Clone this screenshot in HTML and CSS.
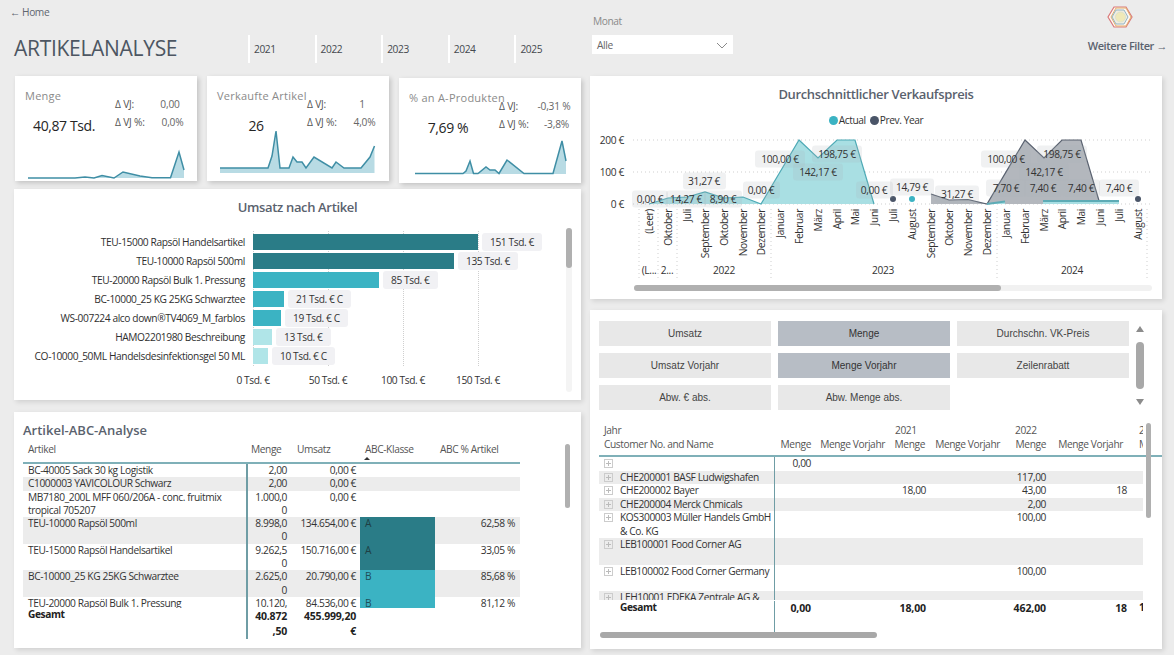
FILE: index.html
```html
<!DOCTYPE html>
<html lang="de">
<head>
<meta charset="utf-8">
<title>Artikelanalyse</title>
<link rel="stylesheet" href="styles.css">
</head>
<body>
<div class="page">
  <header class="top">
    <div class="brand">
      <div class="home">← Home</div>
      <h1>ARTIKELANALYSE</h1>
    </div>
    <nav class="years">
      <span class="year">2021</span><span class="year">2022</span><span class="year">2023</span><span class="year">2024</span><span class="year">2025</span>
    </nav>
    <div class="month">
      <div class="month-label">Monat</div>
      <div class="select"><span>Alle</span>
        <svg class="chev" width="12" height="7" viewBox="0 0 12 7"><path d="M1 1l5 5 5-5" fill="none" stroke="#8a8a8a" stroke-width="1"/></svg>
      </div>
    </div>
    <div class="more">
      <svg class="logo" width="26" height="24" viewBox="0 0 26 24">
        <path d="M7 2h12l6 10-6 10H7L1 12z" fill="#fff6f2" stroke="#d9797a" stroke-width="1.2"/>
        <path d="M9 3h10l5 9-5 9H9l-5-9z" fill="none" stroke="#e3b06c" stroke-width="1"/>
        <path d="M9 5h8l4 7-4 7H9l-4-7z" fill="#f0ece0" stroke="#8fb6c6" stroke-width="1"/>
        <circle cx="13.5" cy="12" r="5" fill="#efe9b8" stroke="#d9dfc8" stroke-width=".8"/>
      </svg>
      <div class="more-link">Weitere Filter →</div>
    </div>
  </header>

  <main class="board">
    <section class="col">
      <div class="cards">
        <article class="card">
          <div class="card-left">
            <div class="card-title">Menge</div>
            <div class="card-value">40,87 Tsd.</div>
          </div>
          <div class="delta">
            <span>Δ VJ:</span><span class="dv">0,00</span>
            <span>Δ VJ %:</span><span class="dv dv2">0,0%</span>
          </div>
          <svg class="spark" viewBox="0 0 182 51" width="182" height="51">
            <polygon class="spark-fill" points="13,48 60,48 70,47 79,48 87,45.5 99,48 108,42 125,46 137,47.7 155.5,47.7 164,22 169,40 169,48"/>
            <polyline class="spark-line" points="13,48 60,48 70,47 79,48 87,45.5 99,48 108,42 125,46 137,47.7 155.5,47.7 164,22 169,40"/>
          </svg>
        </article>
        <article class="card">
          <div class="card-left">
            <div class="card-title">Verkaufte Artikel</div>
            <div class="card-value">26</div>
          </div>
          <div class="delta">
            <span>Δ VJ:</span><span class="dv">1</span>
            <span>Δ VJ %:</span><span class="dv dv2">4,0%</span>
          </div>
          <svg class="spark" viewBox="0 0 182 51" width="182" height="51">
            <polygon class="spark-fill" points="13,43 13,38 61,38 65,26 69,1 73,38 82,38 86,27 90,32 95,32 99,38 107,27 125,38 129,32 137,38 154,38 163,27 167.5,16 167.5,43"/>
            <polyline class="spark-line" points="13,38 61,38 65,26 69,1 73,38 82,38 86,27 90,32 95,32 99,38 107,27 125,38 129,32 137,38 154,38 163,27 167.5,16"/>
          </svg>
        </article>
        <article class="card card-low">
          <div class="card-left">
            <div class="card-title">% an A-Produkten</div>
            <div class="card-value">7,69 %</div>
          </div>
          <div class="delta">
            <span>Δ VJ:</span><span class="dv">-0,31 %</span>
            <span>Δ VJ %:</span><span class="dv dv2">-3,8%</span>
          </div>
          <svg class="spark" viewBox="0 0 182 51" width="182" height="51">
            <polygon class="spark-fill" points="16,42 16,41.5 64,41.5 67,39 71,29 74.5,41.5 79,41.5 87,35 91,38 96,38 100,41.5 108,28 125,41.5 154,41.5 163,9 167,29 167,42"/>
            <polyline class="spark-line" points="16,41.5 64,41.5 67,39 71,29 74.5,41.5 79,41.5 87,35 91,38 96,38 100,41.5 108,28 125,41.5 154,41.5 163,9 167,29"/>
          </svg>
        </article>
      </div>

      <section class="panel revenue">
        <h2 class="panel-title">Umsatz nach Artikel</h2>
        <div class="bars">
          <div class="bar-grid"><i></i><i></i><i></i><i></i></div>
          <div class="bar-row"><span class="bar-label">TEU-15000 Rapsöl Handelsartikel</span><span class="bar dark" style="width:225px"></span><span class="badge">151 Tsd. €</span></div>
          <div class="bar-row"><span class="bar-label">TEU-10000 Rapsöl 500ml</span><span class="bar dark" style="width:201px"></span><span class="badge">135 Tsd. €</span></div>
          <div class="bar-row"><span class="bar-label">TEU-20000 Rapsöl Bulk 1. Pressung</span><span class="bar teal" style="width:126px"></span><span class="badge">85 Tsd. €</span></div>
          <div class="bar-row"><span class="bar-label">BC-10000_25 KG 25KG Schwarztee</span><span class="bar teal" style="width:31px"></span><span class="badge">21 Tsd. € C</span></div>
          <div class="bar-row"><span class="bar-label">WS-007224 alco down®TV4069_M_farblos</span><span class="bar teal" style="width:28px"></span><span class="badge">19 Tsd. € C</span></div>
          <div class="bar-row"><span class="bar-label">HAMO2201980 Beschreibung</span><span class="bar pale" style="width:19px"></span><span class="badge">13 Tsd. €</span></div>
          <div class="bar-row"><span class="bar-label">CO-10000_50ML Handelsdesinfektionsgel 50 ML</span><span class="bar pale" style="width:15px"></span><span class="badge">10 Tsd. € C</span></div>
        </div>
        <div class="bar-axis"><span>0 Tsd. €</span><span>50 Tsd. €</span><span>100 Tsd. €</span><span>150 Tsd. €</span></div>
        <div class="vscroll rev-scroll"><b></b></div>
      </section>

      <section class="panel abc">
        <h2 class="abc-title">Artikel-ABC-Analyse</h2>
        <div class="abc-grid abc-head">
          <div class="c-a">Artikel</div><div class="c-h">Menge</div><div class="c-h c-um">Umsatz</div><div class="c-k">ABC-Klasse<i class="sort"></i></div><div class="c-h c-p">ABC % Artikel</div>
        </div>
        <div class="abc-body">
          <div class="abc-grid"><div class="c-a">BC-40005 Sack 30 kg Logistik</div><div class="c-m">2,00</div><div class="c-u">0,00 €</div><div class="c-k"></div><div class="c-p"></div></div>
          <div class="abc-grid alt"><div class="c-a">C1000003 YAVICOLOUR Schwarz</div><div class="c-m">2,00</div><div class="c-u">0,00 €</div><div class="c-k"></div><div class="c-p"></div></div>
          <div class="abc-grid"><div class="c-a">MB7180_200L MFF 060/206A - conc. fruitmix<br>tropical 705207</div><div class="c-m">1.000,0<br>0</div><div class="c-u">0,00 €</div><div class="c-k"></div><div class="c-p"></div></div>
          <div class="abc-grid alt"><div class="c-a">TEU-10000 Rapsöl 500ml</div><div class="c-m">8.998,0<br>0</div><div class="c-u">134.654,00 €</div><div class="c-k k-a">A</div><div class="c-p">62,58 %</div></div>
          <div class="abc-grid"><div class="c-a">TEU-15000 Rapsöl Handelsartikel</div><div class="c-m">9.262,5<br>0</div><div class="c-u">150.716,00 €</div><div class="c-k k-a">A</div><div class="c-p">33,05 %</div></div>
          <div class="abc-grid alt"><div class="c-a">BC-10000_25 KG 25KG Schwarztee</div><div class="c-m">2.625,0<br>0</div><div class="c-u">20.790,00 €</div><div class="c-k k-b">B</div><div class="c-p">85,68 %</div></div>
          <div class="abc-grid"><div class="c-a">TEU-20000 Rapsöl Bulk 1. Pressung</div><div class="c-m">10.120,<br>00</div><div class="c-u">84.536,00 €</div><div class="c-k k-b">B</div><div class="c-p">81,12 %</div></div>
        </div>
        <div class="abc-grid abc-total">
          <div class="c-a">Gesamt</div><div class="c-m">40.872<br>,50</div><div class="c-u">455.999,20<br>€</div><div class="c-k"></div><div class="c-p"></div>
        </div>
        <div class="vscroll abc-scroll"><b></b></div>
      </section>
    </section>

    <section class="col">
      <section class="panel price">
        <h2 class="panel-title price-title">Durchschnittlicher Verkaufspreis</h2>
        <div class="legend"><i class="dot d-teal"></i><span>Actual</span><i class="dot d-dark"></i><span>Prev. Year</span></div>
        <svg class="chart" width="572" height="169" viewBox="590 130 572 169">
          <g class="gridl">
            <line x1="633" x2="1150" y1="140" y2="140"/><line x1="633" x2="1150" y1="172" y2="172"/><line x1="633" x2="1150" y1="204" y2="204"/>
            <line x1="639" x2="639" y1="209" y2="279"/><line x1="658" x2="658" y1="209" y2="279"/><line x1="677" x2="677" y1="209" y2="279"/><line x1="771" x2="771" y1="209" y2="279"/><line x1="997" x2="997" y1="209" y2="279"/><line x1="1147" x2="1147" y1="209" y2="279"/>
          </g>
          <g class="axt axr">
            <text x="624" y="144">200 €</text><text x="624" y="176">100 €</text><text x="624" y="208">0 €</text>
          </g>
          <polygon class="area-prev" points="931,194 949,200 968,199.5 987,204 1025,140 1044,158 1062,140 1081,140 1100,204 931,204"/>
          <polyline class="line-prev" points="931,194 949,200 968,199.5 987,204 1025,140 1044,158 1062,140 1081,140 1100,204"/>
          <polygon class="area-act" points="649,204 668,198 687,197 705,192 724,198 743,197 761,204 799,140 818,158 837,140 855,140 874,204"/>
          <polyline class="line-act" points="649,204 668,198 687,197 705,192 724,198 743,197 761,204 799,140 818,158 837,140 855,140 874,204"/>
          <polygon class="area-act" points="987,204 1005,201.5 1005,204"/>
          <polygon class="area-act" points="1043,201 1119,201 1119,204 1043,204"/>
          <polyline class="line-act2" points="987,204 1005,201.5"/>
          <polyline class="line-act2" points="1043,201 1119,201"/>
          <circle cx="893" cy="199" r="3" fill="#4a5568"/><circle cx="912" cy="199" r="3" fill="#3bb3c3"/><circle cx="1138" cy="199" r="3" fill="#4a5568"/>
          <g class="lbl-box">
            <rect x="632" y="190.5" width="36" height="17" rx="3"/><rect x="666" y="190.5" width="40" height="17" rx="3"/><rect x="704" y="190.5" width="38" height="17" rx="3"/><rect x="683" y="172.5" width="43" height="17" rx="3"/><rect x="743" y="181.5" width="37" height="17" rx="3"/><rect x="755" y="150.5" width="50" height="17" rx="3"/><rect x="812" y="145.5" width="50" height="17" rx="3"/><rect x="793" y="163.5" width="50" height="17" rx="3"/><rect x="856" y="181.5" width="37" height="17" rx="3"/><rect x="890" y="178.5" width="44" height="17" rx="3"/><rect x="935" y="185.5" width="44" height="17" rx="3"/><rect x="981" y="150.5" width="50" height="17" rx="3"/><rect x="1037" y="145.5" width="50" height="17" rx="3"/><rect x="1019" y="163.5" width="50" height="17" rx="3"/><rect x="986" y="179.5" width="40" height="17" rx="3"/><rect x="1024" y="179.5" width="38" height="17" rx="3"/><rect x="1062" y="179.5" width="38" height="17" rx="3"/><rect x="1099" y="179.5" width="40" height="17" rx="3"/>
          </g>
          <g class="axt axc">
            <text x="650" y="203">0,00 €</text><text x="686" y="203">14,27 €</text><text x="723" y="203">8,90 €</text><text x="704" y="185">31,27 €</text><text x="761" y="194">0,00 €</text><text x="780" y="163">100,00 €</text><text x="837" y="158">198,75 €</text><text x="818" y="176">142,17 €</text><text x="874" y="194">0,00 €</text><text x="912" y="191">14,79 €</text><text x="957" y="198">31,27 €</text><text x="1006" y="163">100,00 €</text><text x="1062" y="158">198,75 €</text><text x="1044" y="176">142,17 €</text><text x="1006" y="192">7,70 €</text><text x="1043" y="192">7,40 €</text><text x="1081" y="192">7,40 €</text><text x="1119" y="192">7,40 €</text>
          </g>
          <g class="axt axe">
            <text transform="translate(653 209) rotate(-90)">(Leer)</text><text transform="translate(672 209) rotate(-90)">Oktober</text><text transform="translate(691 209) rotate(-90)">Juli</text><text transform="translate(709 209) rotate(-90)">September</text><text transform="translate(728 209) rotate(-90)">Oktober</text><text transform="translate(747 209) rotate(-90)">November</text><text transform="translate(765 209) rotate(-90)">Dezember</text><text transform="translate(784 209) rotate(-90)">Januar</text><text transform="translate(803 209) rotate(-90)">Februar</text><text transform="translate(822 209) rotate(-90)">März</text><text transform="translate(841 209) rotate(-90)">April</text><text transform="translate(859 209) rotate(-90)">Mai</text><text transform="translate(878 209) rotate(-90)">Juni</text><text transform="translate(897 209) rotate(-90)">Juli</text><text transform="translate(916 209) rotate(-90)">August</text><text transform="translate(935 209) rotate(-90)">September</text><text transform="translate(953 209) rotate(-90)">Oktober</text><text transform="translate(972 209) rotate(-90)">November</text><text transform="translate(991 209) rotate(-90)">Dezember</text><text transform="translate(1010 209) rotate(-90)">Januar</text><text transform="translate(1029 209) rotate(-90)">Februar</text><text transform="translate(1048 209) rotate(-90)">März</text><text transform="translate(1066 209) rotate(-90)">April</text><text transform="translate(1085 209) rotate(-90)">Mai</text><text transform="translate(1104 209) rotate(-90)">Juni</text><text transform="translate(1123 209) rotate(-90)">Juli</text><text transform="translate(1142 209) rotate(-90)">August</text>
          </g>
          <g class="axt axc">
            <text x="649" y="274">(L...</text><text x="667" y="274">2...</text><text x="724" y="274">2022</text><text x="883" y="274">2023</text><text x="1072" y="274">2024</text>
          </g>
          <rect x="634" y="285" width="518" height="6" rx="3" fill="#f1f1f1"/>
          <rect x="634" y="285" width="367" height="6" rx="3" fill="#b0b0b0"/>
        </svg>
      </section>

      <section class="panel detail">
        <div class="tiles">
          <div class="tile">Umsatz</div><div class="tile on">Menge</div><div class="tile">Durchschn. VK-Preis</div>
          <div class="tile">Umsatz Vorjahr</div><div class="tile on">Menge Vorjahr</div><div class="tile">Zeilenrabatt</div>
          <div class="tile">Abw. € abs.</div><div class="tile">Abw. Menge abs.</div>
        </div>
        <div class="tile-scroll"><i class="up"></i><b></b><i class="down"></i></div>

        <div class="mx-head">
          <div class="mx-grid">
            <div class="mx-n">Jahr</div><div></div><div></div><div class="mx-y">2021</div><div></div><div class="mx-y">2022</div><div></div><div class="mx-l">2</div>
          </div>
          <div class="mx-grid">
            <div class="mx-n">Customer No. and Name</div><div class="mx-r">Menge</div><div class="mx-r mx-first">Menge Vorjahr</div><div class="mx-r mx-first">Menge</div><div class="mx-r mx-mid">Menge Vorjahr</div><div class="mx-r">Menge</div><div class="mx-r mx-last">Menge Vorjahr</div><div class="mx-l">M</div>
          </div>
        </div>
        <div class="mx-body">
          <div class="mx-grid"><div class="mx-name"><i class="plus"></i><span></span></div><div class="mx-v">0,00</div><div></div><div></div><div></div><div></div><div></div><div></div></div>
          <div class="mx-grid alt"><div class="mx-name"><i class="plus"></i><span>CHE200001 BASF Ludwigshafen</span></div><div></div><div></div><div></div><div></div><div class="mx-v">117,00</div><div></div><div></div></div>
          <div class="mx-grid"><div class="mx-name"><i class="plus"></i><span>CHE200002 Bayer</span></div><div></div><div></div><div class="mx-v">18,00</div><div></div><div class="mx-v">43,00</div><div class="mx-v">18</div><div></div></div>
          <div class="mx-grid alt"><div class="mx-name"><i class="plus"></i><span>CHE200004 Merck Chmicals</span></div><div></div><div></div><div></div><div></div><div class="mx-v">2,00</div><div></div><div></div></div>
          <div class="mx-grid"><div class="mx-name"><i class="plus"></i><span>KOS300003 Müller Handels GmbH<br>&amp; Co. KG</span></div><div></div><div></div><div></div><div></div><div class="mx-v">100,00</div><div></div><div></div></div>
          <div class="mx-grid alt tall"><div class="mx-name"><i class="plus"></i><span>LEB100001 Food Corner AG</span></div><div></div><div></div><div></div><div></div><div></div><div></div><div></div></div>
          <div class="mx-grid tall"><div class="mx-name"><i class="plus"></i><span>LEB100002 Food Corner Germany</span></div><div></div><div></div><div></div><div></div><div class="mx-v">100,00</div><div></div><div></div></div>
          <div class="mx-grid alt tall"><div class="mx-name"><i class="plus"></i><span>LEH10001 EDEKA Zentrale AG &amp;</span></div><div></div><div></div><div></div><div></div><div></div><div></div><div></div></div>
        </div>
        <div class="mx-grid mx-total">
          <div class="mx-name"><i class="plus none"></i><span>Gesamt</span></div><div class="mx-v">0,00</div><div></div><div class="mx-v">18,00</div><div></div><div class="mx-v">462,00</div><div class="mx-v">18</div><div class="mx-l">1</div>
        </div>
        <div class="mx-vbar"></div>
        <div class="mx-hbar"></div>
      </section>
    </section>
  </main>
</div>
</body>
</html>
```
FILE: styles.css
```css
* { box-sizing: border-box; }
html, body { margin: 0; padding: 0; }
body {
  width: 1174px;
  height: 655px;
  overflow: hidden;
  background: #ececec;
  font-family: "Open Sans", "Liberation Sans", sans-serif;
  font-size: 10.2px;
  letter-spacing: -0.4px;
  color: #333;
}
.page { width: 1174px; height: 655px; overflow: hidden; }

/* header */
.top { display: flex; height: 76px; }
.brand { width: 248px; padding: 5px 0 0 10px; }
.home { line-height: 14px; color: #5f6670; }
h1 {
  margin: 14px 0 0 4px;
  font-size: 21px;
  line-height: 30px;
  font-weight: 500;
  color: #4d5662;
  letter-spacing: -0.3px;
  white-space: nowrap;
}
.years { display: flex; padding-top: 35px; width: 344px; align-self: flex-start; }
.year {
  width: 66.6px;
  height: 28px;
  border-left: 2px solid #fff;
  padding: 8px 0 0 4px;
  line-height: 13px;
  color: #44494f;
}
.month { width: 141px; padding-top: 14px; }
.month-label { line-height: 14px; color: #8a8a8a; padding-left: 1px; margin-bottom: 7px; }
.select {
  height: 19px;
  background: #fff;
  display: flex;
  align-items: center;
  justify-content: space-between;
  padding: 0 5px;
  color: #666;
}
.chev { margin-top: 1px; }
.more { flex: 1; display: flex; flex-direction: column; align-items: flex-end; padding: 5px 7px 0 0; }
.logo { margin-right: 34px; }
.more-link { margin-top: 10px; font-size: 11px; line-height: 14px; font-weight: 600; letter-spacing: -0.4px; color: #5a626e; white-space: nowrap; }

/* grid */
.board { display: grid; grid-template-columns: 567px 572px; column-gap: 9px; padding-left: 14px; }
.col { display: flex; flex-direction: column; }
.panel { background: #fff; box-shadow: 2px 2px 5px rgba(0, 0, 0, .12); position: relative; }

/* KPI cards */
.cards { display: flex; gap: 10px; height: 107px; margin: 0 0 6px 1px; }
.card {
  width: 182px;
  height: 105px;
  background: #fff;
  box-shadow: 2px 2px 5px rgba(0, 0, 0, .18);
  display: grid;
  grid-template-columns: 100px 82px;
  grid-template-rows: 54px 51px;
}
.card-low { margin-top: 2px; }
.card-left { padding-top: 13px; }
.card-title { padding-left: 10px; font-size: 11px; line-height: 14px; color: #8a8a8a; white-space: nowrap; letter-spacing: .25px; }
.card-value { margin-top: 13px; padding-right: 2px; font-size: 14px; line-height: 20px; letter-spacing: -0.4px; color: #252525; text-align: center; }
.delta {
  display: grid;
  grid-template-columns: 35px 40px;
  grid-auto-rows: 18px;
  align-items: center;
  padding-top: 19px;
  letter-spacing: -0.2px;
  color: #555;
  white-space: nowrap;
}
.dv { text-align: center; color: #666; }
.dv2 { padding-left: 5px; }
.spark { grid-column: 1 / 3; display: block; }
.spark-fill { fill: #b8dbe4; }
.spark-line { fill: none; stroke: #3f8ea5; stroke-width: 1.5; }

/* bar panel */
.revenue { height: 211px; margin-bottom: 12px; }
.panel-title {
  margin: 0;
  padding-top: 10px;
  text-align: center;
  font-size: 13px;
  line-height: 17px;
  font-weight: 600;
  letter-spacing: -0.35px;
  color: #5a626e;
}
.bars { position: relative; margin-top: 16px; }
.bar-grid {
  position: absolute;
  left: 239px; top: -1px; width: 226px; height: 135px;
  display: flex;
  justify-content: space-between;
}
.bar-grid i { border-left: 1px dotted #cfcfcf; }
.bar-row { position: relative; display: flex; align-items: center; height: 19px; }
.bar-label { width: 231px; margin-right: 8px; text-align: right; white-space: nowrap; color: #2f2f2f; }
.bar { height: 16px; flex: none; }
.dark { background: #2a7c87; }
.teal { background: #3bb3c3; }
.pale { background: #b0e5e8; }
.badge {
  margin-left: 4px;
  padding: 0 8px;
  height: 18px;
  line-height: 18px;
  border-radius: 3px;
  background: #f1f1f4;
  white-space: nowrap;
  color: #333;
}
.bar-axis { display: grid; grid-template-columns: repeat(4, 75px); padding-left: 201.5px; margin-top: 8px; line-height: 14px; text-align: center; color: #333; }
.vscroll { position: absolute; width: 6px; background: #f4f4f4; border-radius: 3px; }
.vscroll b { display: block; background: #b0b0b0; border-radius: 3px; }
.rev-scroll { left: 552px; top: 39px; height: 164px; }
.rev-scroll b { height: 40px; }

/* ABC table */
.abc { height: 236px; padding-left: 9px; }
.abc-title { margin: 0; padding-top: 10px; font-size: 13px; line-height: 17px; font-weight: 600; letter-spacing: 0; color: #5a626e; }
.abc-grid {
  display: grid;
  grid-template-columns: 223px 44px 70px 75px 85px;
  width: 497px;
  line-height: 13.3px;
}
.abc-head { height: 25px; padding-top: 4px; border-bottom: 2px solid #7fb0b8; color: #555; }
.abc-body { height: 144px; overflow: hidden; }
.alt { background: #ececec; }
.c-a { padding-left: 5px; padding-right: 4px; }
.c-m { border-left: 2px solid #6f9da5; padding: 0 3px; text-align: right; white-space: nowrap; }
.c-u { padding-right: 4px; text-align: right; white-space: nowrap; }
.c-k { padding-left: 5px; position: relative; }
.c-p { padding-right: 5px; text-align: right; }
.c-h { padding-left: 5px; }
.c-um { padding-left: 7px; }
.abc-head .c-p { text-align: left; padding-left: 5px; }
.abc-head .c-h { white-space: nowrap; }
.k-a { background: #2a7c87; color: #1e3f44; }
.k-b { background: #3bb3c3; color: #1e4f58; }
.sort { position: absolute; left: 4px; top: 14px; width: 0; height: 0; border: 3px solid transparent; border-top: 0; border-bottom: 3px solid #333; }
.abc-total { height: 31px; font-weight: 700; color: #222; }
.abc-total .c-m, .abc-total .c-u { line-height: 15px; padding-top: 1px; font-size: 10.5px; letter-spacing: -.2px; }
.abc-scroll { left: 551px; top: 32px; height: 64px; width: 5px; }
.abc-scroll b { height: 64px; }

/* chart */
.price { height: 223px; margin-bottom: 11px; }
.price-title { padding-top: 10px; }
.legend { display: flex; justify-content: center; align-items: center; margin-top: 10px; height: 14px; line-height: 14px; color: #333; }
.dot { width: 9px; height: 9px; border-radius: 50%; margin-right: 1px; }
.d-teal { background: #3bb3c3; }
.d-dark { background: #4a5568; margin-left: 4px; }
.chart { display: block; margin-top: 3px; overflow: hidden; }
.gridl line { stroke: #cfcfcf; stroke-dasharray: 1 3; stroke-width: 1; }
.axt text { font-size: 10.2px; letter-spacing: -.35px; fill: #333; }
.axr text, .axe text { text-anchor: end; }
.axc text { text-anchor: middle; }
.area-act { fill: #a9dfe3; }
.line-act { fill: none; stroke: #4da9b5; stroke-width: 1.2; }
.line-act2 { fill: none; stroke: #5dabb5; stroke-width: 2; }
.area-prev { fill: #b3b7bd; }
.line-prev { fill: none; stroke: #5a6270; stroke-width: 1.2; }
.lbl-box rect { fill: #aeb0b8; fill-opacity: .18; }

/* tiles + matrix */
.detail { height: 339px; padding: 11px 0 0 9px; }
.tiles {
  display: grid;
  grid-template-columns: repeat(3, 172px);
  grid-template-rows: repeat(3, 25px);
  gap: 7px;
  font-family: "Liberation Sans", sans-serif;
  font-size: 10px;
  letter-spacing: 0;
  color: #444;
}
.tile { background: #e8e8e8; display: flex; align-items: center; justify-content: center; }
.tile.on { background: #b7bdc5; color: #333; }
.tile-scroll { position: absolute; left: 546px; top: 16px; width: 8px; }
.tile-scroll b { display: block; width: 8px; height: 47px; margin: 10px 0; background: #a8a8a8; border-radius: 4px; }
.up, .down { display: block; width: 0; height: 0; margin: 0 auto; border: 4.5px solid transparent; }
.up { border-top: 0; border-bottom: 6px solid #8c8c8c; }
.down { border-bottom: 0; border-top: 6px solid #8c8c8c; }

.mx-grid {
  display: grid;
  grid-template-columns: 176px 40px 75px 40px 80px 40px 81px 12px;
  width: 544px;
  line-height: 13.5px;
}
.mx-head { margin-top: 13px; height: 34px; border-bottom: 2px solid #7fb0b8; color: #555; padding-top: 1px; }
.mx-n { padding-left: 5px; white-space: nowrap; }
.mx-y { padding-left: 5px; white-space: nowrap; }
.mx-r { text-align: right; padding-right: 4px; white-space: nowrap; }
.mx-first { padding-right: 5px; }
.mx-mid { padding-right: 10px; }
.mx-last { padding-right: 8px; }
.mx-l { overflow: hidden; padding-left: 8px; white-space: nowrap; }
.mx-body { height: 143px; overflow: hidden; position: relative; }
.mx-name { display: flex; padding-left: 5px; border-right: 1px solid #6f9da5; min-width: 0; }
.mx-name span { padding-left: 7px; flex: 1; min-width: 0; white-space: nowrap; }
.plus {
  flex: none;
  width: 9px;
  height: 9px;
  margin-top: 2px;
  border: 1px solid #ccc;
  background:
    linear-gradient(#bbb, #bbb) center / 5px 1px no-repeat,
    linear-gradient(#bbb, #bbb) center / 1px 5px no-repeat;
}
.plus.none { visibility: hidden; }
.mx-v { text-align: right; padding-right: 4px; white-space: nowrap; }
.tall { min-height: 26.6px; }
.mx-total { height: 33px; padding-top: 1px; font-weight: 700; color: #222; }
.mx-total .mx-v { line-height: 15px; font-size: 10.5px; letter-spacing: -.1px; }
.mx-total .mx-name { height: 32px; }
.mx-vbar { position: absolute; left: 556px; top: 113px; width: 5px; height: 95px; background: #b0b0b0; border-radius: 3px; }
.mx-hbar { position: absolute; left: 10px; top: 322px; width: 277px; height: 6px; background: #a8a8a8; border-radius: 3px; }
```
